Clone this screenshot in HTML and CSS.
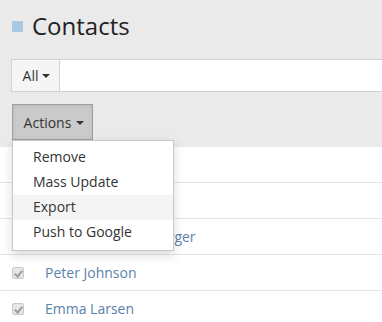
FILE: index.html
```html
<!DOCTYPE html>
<html lang="en">
<head>
  <meta charset="UTF-8" />
  <title>Contacts</title>
  <link rel="stylesheet" href="styles.css">
</head>
<body>

  <h1 class="page-title"><span class="title-mark"></span>Contacts</h1>

  <div class="search-bar">
    <button class="filter-btn">All <span class="caret"></span></button>
    <input type="text" class="search-input" />
  </div>

  <div class="actions">
    <button class="actions-btn">Actions <span class="caret"></span></button>
    <ul class="actions-menu">
      <li>Remove</li>
      <li>Mass Update</li>
      <li class="active">Export</li>
      <li>Push to Google</li>
    </ul>
  </div>

  <table class="contacts">
    <tr><td class="check"><span class="box"></span></td><td class="name">Anna Schmidt</td></tr>
    <tr><td class="check"><span class="box"></span></td><td class="name">Lukas Weber</td></tr>
    <tr><td class="check"><span class="box"></span></td><td class="name">Sebastian Rosenberger</td></tr>
    <tr><td class="check"><span class="box"></span></td><td class="name">Peter Johnson</td></tr>
    <tr><td class="check"><span class="box"></span></td><td class="name">Emma Larsen</td></tr>
  </table>

</body>
</html>
```

FILE: styles.css
```css
body {
  font-family: 'Open Sans', sans-serif;
  margin: 0;
  background-color: #eaeaea;
  color: #333;
  font-size: 14px;
  overflow: hidden;
}

.page-title {
  margin: 0;
  padding: 10px 0 0 12px;
  font-size: 24px;
  font-weight: normal;
  line-height: 32px;
  color: #222;
  display: flex;
  align-items: center;
}

.title-mark {
  width: 11px;
  height: 11px;
  background-color: #a9c8e2;
  margin: 1px 9px 0 0;
}

.search-bar {
  display: flex;
  margin: 17px 0 0 11px;
  height: 33px;
  border: 1px solid #d2d2d2;
  border-right: none;
  background-color: white;
  box-sizing: border-box;
}

.filter-btn {
  font-family: inherit;
  font-size: 14px;
  color: #333;
  background-color: #f5f5f5;
  border: none;
  border-right: 1px solid #d2d2d2;
  width: 48px;
  padding: 0 0 0 2px;
  display: flex;
  align-items: center;
  justify-content: center;
  gap: 4px;
}

.search-input {
  flex: 1;
  border: none;
  outline: none;
}

.caret {
  display: inline-block;
  width: 0;
  height: 0;
  border-left: 4px solid transparent;
  border-right: 4px solid transparent;
  border-top: 4px solid #333;
  margin-top: 1px;
}

.actions {
  position: relative;
  margin: 12px 0 0 12px;
}

.actions-btn {
  font-family: inherit;
  font-size: 14px;
  color: #333;
  background-color: #cbcbcb;
  border: 1px solid #9e9e9e;
  height: 36px;
  width: 81px;
  padding: 0 0 0 3px;
  display: flex;
  align-items: center;
  justify-content: center;
  gap: 5px;
  box-shadow: inset 0 2px 4px rgba(0,0,0,0.08);
}

.actions-menu {
  position: absolute;
  top: 36px;
  left: 0;
  width: 160px;
  margin: 0;
  padding: 4px 0 5px;
  list-style: none;
  background-color: white;
  border: 1px solid #c8c8c8;
  box-shadow: 0 4px 10px rgba(0,0,0,0.15);
  z-index: 2;
}

.actions-menu li {
  height: 25px;
  line-height: 24px;
  padding-left: 20px;
  color: #333;
}

.actions-menu li.active {
  background-color: #f4f4f4;
}

.contacts {
  margin-top: 7px;
  width: 100%;
  border-collapse: collapse;
  background-color: white;
}

.contacts td {
  height: 35px;
  padding: 0;
  border-bottom: 1px solid #e5e5e5;
}

.check {
  width: 45px;
}

.box {
  display: block;
  width: 12px;
  height: 12px;
  margin-left: 12px;
  background-color: #e6e6e6;
  border: 1px solid #c9c9c9;
  border-radius: 2px;
  box-sizing: border-box;
  position: relative;
}

.box::after {
  content: "";
  position: absolute;
  left: 3px;
  top: 1px;
  width: 3px;
  height: 6px;
  border-right: 2px solid #9a9a9a;
  border-bottom: 2px solid #9a9a9a;
  transform: rotate(40deg);
}

.name {
  color: #5a82aa;
}
```
